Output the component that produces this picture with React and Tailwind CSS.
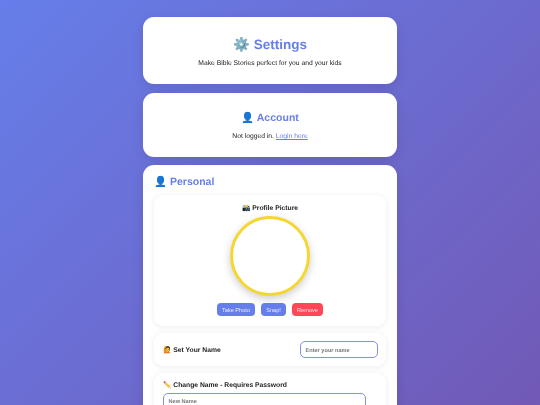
const App = () => {
  return (
    <div
      className="h-screen overflow-hidden bg-[linear-gradient(135deg,#667eea_0%,#764ba2_100%)] bg-size-[540px_770px] bg-no-repeat px-[143px] pt-[17px] [text-rendering:geometricPrecision] blur-[0.3px]"
      style={{ fontFamily: '"Liberation Sans", "Noto Color Emoji", sans-serif' }}
    >
      {/* Header */}
      <div className="mb-[8.5px] flex h-[67px] flex-col items-center rounded-[11px] bg-white pt-[19px] shadow-[0_3px_12px_rgba(0,0,0,0.1)]">
        <h1 className="text-[13.5px] leading-[18px] font-bold text-[#667eea]">⚙️ Settings</h1>
        <p className="mt-[4.5px] text-[6.75px] leading-[10px] text-[#222]">Make Bible Stories perfect for you and your kids</p>
      </div>

      {/* Account */}
      <div className="mb-[8.5px] flex h-[64px] flex-col items-center rounded-[11px] bg-white pt-[18.5px] shadow-[0_3px_12px_rgba(0,0,0,0.1)]">
        <h2 className="text-[10.5px] leading-[15px] font-bold text-[#667eea]">👤 Account</h2>
        <p className="mt-[6px] text-[6.75px] leading-[9px] text-[#222]">
          Not logged in. <span className="text-[#667eea] underline">Login here</span>
        </p>
      </div>

      {/* Personal */}
      <div className="rounded-[11px] bg-white px-[11px] pt-[10px] shadow-[0_3px_12px_rgba(0,0,0,0.1)]">
        <h2 className="mb-[4.5px] text-[10.5px] leading-[15px] font-bold text-[#667eea]">👤 Personal</h2>

        <div className="mb-[7px] flex h-[131px] flex-col items-center rounded-[9px] bg-white pt-[9.5px] shadow-[0_1px_6px_rgba(0,0,0,0.08)]">
          <div className="text-[6.75px] leading-[10px] font-bold text-[#222]">📸 Profile Picture</div>
          <div className="mt-[2px] h-[80px] w-[80px] rounded-full border-[3px] border-[#f5d732] bg-white shadow-[0_3px_8px_rgba(0,0,0,0.2)]" />
          <div className="mt-[6.5px] flex gap-[6px]">
            <button className="h-[13px] w-[38px] rounded-[4px] bg-[#667eea] pt-[1px] text-[5.6px] leading-[12px] text-[#e8ebff]">Take Photo</button>
            <button className="h-[13px] w-[25px] rounded-[4px] bg-[#667eea] pt-[1px] text-[5.6px] leading-[12px] text-[#e8ebff]">Snap!</button>
            <button className="h-[13px] w-[31px] rounded-[4px] bg-[#ff4757] pt-[1px] text-[5.6px] leading-[12px] text-[#ffe8ea]">Remove</button>
          </div>
        </div>

        <div className="mb-[7px] flex h-[33px] items-center justify-between rounded-[9px] bg-white pr-[8px] pl-[9px] shadow-[0_1px_6px_rgba(0,0,0,0.08)]">
          <div className="pt-[4px] text-[6.75px] leading-[10px] font-bold text-[#222]">🙋 Set Your Name</div>
          <div className="flex h-[17px] w-[78px] items-center rounded-[5px] border border-[#7f93ec] pt-[4px] pl-[4.5px] text-[5.6px] leading-[8px] font-bold text-[#777]">Enter your name</div>
        </div>

        <div className="h-[60px] rounded-[9px] bg-white px-[9px] pt-[8px] shadow-[0_1px_6px_rgba(0,0,0,0.08)]">
          <div className="text-[6.75px] leading-[10px] font-bold text-[#222]">✏️ Change Name - Requires Password</div>
          <div className="mt-[2.5px] flex h-[17px] w-[203px] items-center rounded-[5px] border border-[#7f93ec] pl-[4.5px] text-[5.6px] leading-[8px] font-bold text-[#777]">New Name</div>
        </div>
      </div>
    </div>
  );
};

export default App;
